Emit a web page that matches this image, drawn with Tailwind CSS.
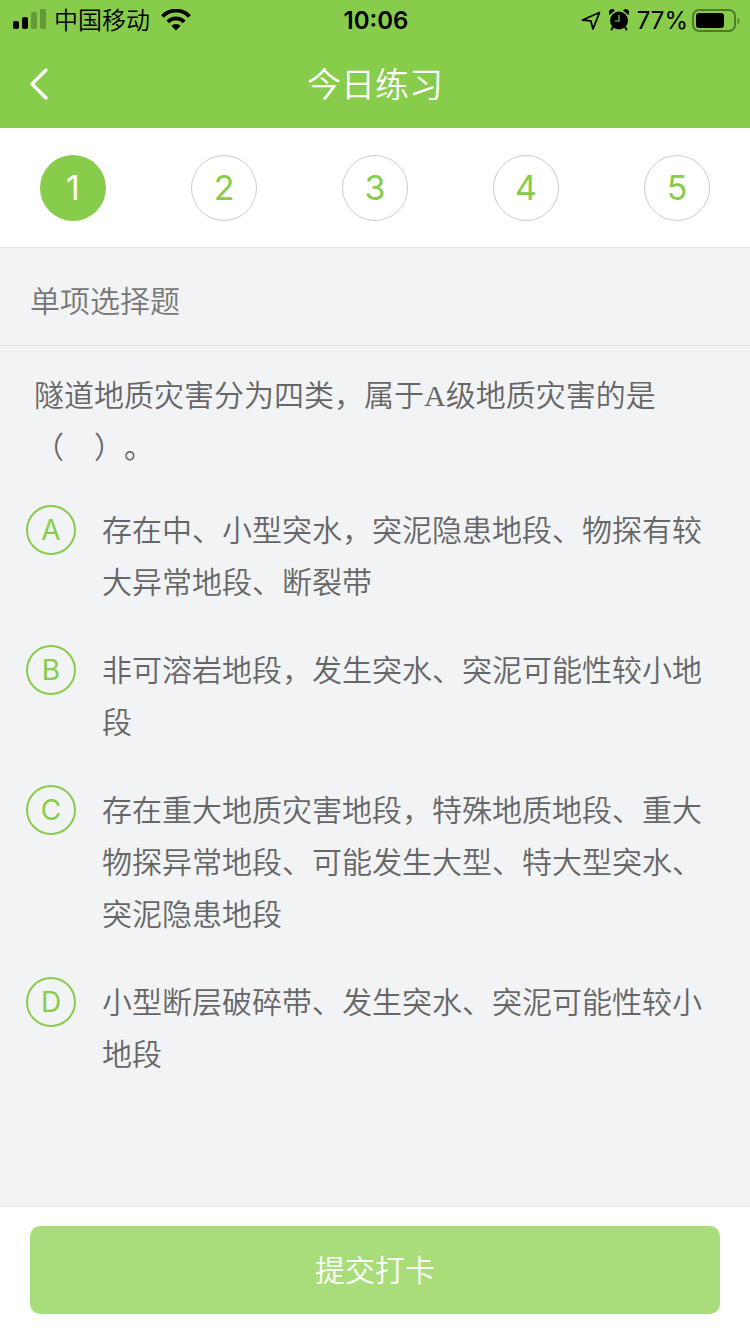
<!DOCTYPE html>
<html lang="zh-CN">

<head>
    <meta charset="UTF-8">
    <meta name="viewport" content="width=device-width, initial-scale=1.0">
    <title>今日练习</title>
    <script src="https://cdn.jsdelivr.net/npm/@tailwindcss/browser@4"></script>
</head>

<body class="bg-[#f2f3f5] min-h-screen flex flex-col font-['Inter','Noto_Sans_CJK_SC',sans-serif] text-[#666666]">
    <header class="bg-[#87cc4a]">
        <!-- Status bar -->
        <div class="grid grid-cols-3 items-center h-10 pl-3 pr-2.5 pt-0.5 text-black">
            <div class="flex items-center gap-2">
                <svg class="w-[34px] h-6" viewBox="0 0 34 24">
                    <rect x="1" y="12" width="6" height="8" rx="2" />
                    <rect x="10" y="8" width="6" height="12" rx="2" />
                    <rect x="19" y="3" width="6" height="17" rx="2" fill-opacity=".25" />
                    <rect x="28" y="-1" width="6" height="21" rx="2" fill-opacity=".25" />
                </svg>
                <span class="text-2xl font-[350] whitespace-nowrap">中国移动</span>
                <svg class="w-9 h-6" viewBox="-3 0 36 24" fill="none" stroke="#000" stroke-width="3.8">
                    <path d="M1.500 7.500a18.500 18.500 0 0 1 27 0" />
                    <path d="M6.800 12.800a11.500 11.500 0 0 1 16.400 0" />
                    <path d="M15 21.500l-4.600-4.700a6.600 6.600 0 0 1 9.200 0z" fill="#000" stroke="none" />
                </svg>
            </div>
            <div class="text-center text-2xl font-semibold">10:06</div>
            <div class="flex items-center justify-end gap-1">
                <svg class="w-5 h-5 mr-1" viewBox="0 0 20 20" fill="none" stroke="#000" stroke-width="1.8" stroke-linejoin="round">
                    <path d="M18.500 1.500L1.500 9l8.200.8L12 18z" />
                </svg>
                <svg class="w-5 h-6 mr-1" viewBox="0 0 20 24">
                    <circle cx="10" cy="11.500" r="9" />
                    <path d="M.5 6a3.500 3.500 0 0 1 5.500-4.500zM19.500 6a3.500 3.500 0 0 0-5.500-4.500z" />
                    <path d="M4 18l-1.500 2.500M16 18l1.500 2.500" stroke="#000" stroke-width="2" stroke-linecap="round" />
                    <path d="M10 6v6H5.500" fill="none" stroke="#87cc4a" stroke-width="1.200" />
                </svg>
                <span class="text-2xl">77%</span>
                <svg class="w-12 h-6" viewBox="0 0 48 24">
                    <rect x="1" y="1" width="42" height="21" rx="6" fill="none" stroke="#000" stroke-opacity=".4" stroke-width="2" />
                    <rect x="4" y="4" width="28" height="15" rx="3" />
                    <path d="M45.500 8.500q2 1 2 3.500t-2 3.500z" fill-opacity=".4" />
                </svg>
            </div>
        </div>
        <!-- Title bar -->
        <div class="grid grid-cols-[80px_1fr_80px] items-center h-[88px] text-white">
            <a href="#" aria-label="返回" class="pl-7">
                <svg class="w-5 h-8" viewBox="0 0 20 32" fill="none" stroke="#fff" stroke-width="3.200" stroke-linecap="round">
                    <path d="M18 2L4 16l14 14" />
                </svg>
            </a>
            <h1 class="text-center text-[34px] font-[350]">今日练习</h1>
        </div>
    </header>

    <nav class="flex justify-between items-center h-[120px] px-10 bg-white border-b border-[#e5e6e8] text-[34px]">
        <button class="size-[66px] rounded-full bg-[#87cc4a] text-white">1</button>
        <button class="size-[66px] rounded-full border border-[#cccccc] text-[#87cc4a]">2</button>
        <button class="size-[66px] rounded-full border border-[#cccccc] text-[#87cc4a]">3</button>
        <button class="size-[66px] rounded-full border border-[#cccccc] text-[#87cc4a]">4</button>
        <button class="size-[66px] rounded-full border border-[#cccccc] text-[#87cc4a]">5</button>
    </nav>

    <h2 class="flex items-center h-[98px] px-[30px] pt-2.5 border-b border-[#e5e6e8] text-[30px] font-[350] text-[#777777]">单项选择题</h2>

    <main class="grow px-[26px] pt-6 text-[30px] leading-[52px] font-[350]">
        <p id="question" class="px-2 font-['Liberation_Serif','Noto_Sans_CJK_SC',serif] [text-spacing-trim:space-all]">隧道地质灾害分为四类，属于A级地质灾害的是（&nbsp;&nbsp;&nbsp;&nbsp;）。</p>
        <div role="radiogroup" aria-labelledby="question" class="flex flex-col gap-9 mt-[30px]">
            <label class="relative flex items-start gap-[26px]">
                <input type="radio" name="answer" value="A" class="sr-only">
                <span class="flex items-center justify-center shrink-0 size-[50px] mt-px rounded-full border-2 border-[#87cc4a] text-[#87cc4a] text-[28px] font-normal">A</span>
                <span class="pr-4">存在中、小型突水，突泥隐患地段、物探有较大异常地段、断裂带</span>
            </label>
            <label class="relative flex items-start gap-[26px]">
                <input type="radio" name="answer" value="B" class="sr-only">
                <span class="flex items-center justify-center shrink-0 size-[50px] mt-px rounded-full border-2 border-[#87cc4a] text-[#87cc4a] text-[28px] font-normal">B</span>
                <span class="pr-4">非可溶岩地段，发生突水、突泥可能性较小地段</span>
            </label>
            <label class="relative flex items-start gap-[26px]">
                <input type="radio" name="answer" value="C" class="sr-only">
                <span class="flex items-center justify-center shrink-0 size-[50px] mt-px rounded-full border-2 border-[#87cc4a] text-[#87cc4a] text-[28px] font-normal">C</span>
                <span class="pr-4">存在重大地质灾害地段，特殊地质地段、重大物探异常地段、可能发生大型、特大型突水、突泥隐患地段</span>
            </label>
            <label class="relative flex items-start gap-[26px]">
                <input type="radio" name="answer" value="D" class="sr-only">
                <span class="flex items-center justify-center shrink-0 size-[50px] mt-px rounded-full border-2 border-[#87cc4a] text-[#87cc4a] text-[28px] font-normal">D</span>
                <span class="pr-4">小型断层破碎带、发生突水、突泥可能性较小地段</span>
            </label>
        </div>
    </main>

    <footer class="bg-white border-t border-[#e5e6e8] px-[30px] pt-[19px] pb-5">
        <button class="w-full h-[88px] rounded-[10px] bg-[#a9dd7a] text-white text-[30px] font-[350]">提交打卡</button>
    </footer>
</body>

</html>
